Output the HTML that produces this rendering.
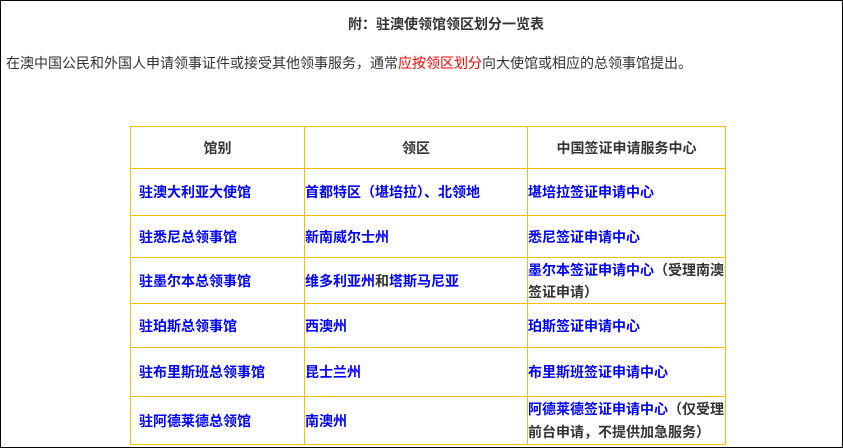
<!DOCTYPE html>
<html><head><meta charset="utf-8"><style>
html,body{margin:0;padding:0;}
body{width:843px;height:448px;box-sizing:border-box;border:1px solid #000;position:relative;overflow:hidden;background:#fff;font-family:"Liberation Sans","Noto Sans CJK SC",sans-serif;color:#333;font-size:14px;}
.t{position:absolute;top:13px;left:0;width:890px;text-align:center;font-weight:bold;font-size:14px;}
.p{position:absolute;top:52px;left:5px;font-size:14px;white-space:nowrap;}
.r{color:#f00;}
table{position:absolute;left:129px;top:125px;border-collapse:collapse;table-layout:fixed;}
td{border:1px solid #f5c000;font-weight:bold;padding:0 0 0 8px;line-height:22px;vertical-align:middle;overflow:hidden;}
td.c{text-align:center;padding:0;}
.b{color:#00f;}
td.n{padding-left:0;}
</style></head><body>
<div class="t">附：驻澳使领馆领区划分一览表</div>
<div class="p">在澳中国公民和外国人申请领事证件或接受其他领事服务，通常<span class="r">应按领区划分</span>向大使馆或相应的总领事馆提出。</div>
<table>
<colgroup><col style="width:174px"><col style="width:223px"><col style="width:198px"></colgroup>
<tr style="height:42px"><td class="c">馆别</td><td class="c">领区</td><td class="c">中国签证申请服务中心</td></tr>
<tr style="height:47px"><td class="b">驻澳大利亚大使馆</td><td class="b n">首都特区（堪培拉）、北领地</td><td class="b n">堪培拉签证申请中心</td></tr>
<tr style="height:42px"><td class="b">驻悉尼总领事馆</td><td class="b n">新南威尔士州</td><td class="b n">悉尼签证申请中心</td></tr>
<tr style="height:46px"><td class="b">驻墨尔本总领事馆</td><td class="n"><span class="b">维多利亚州</span>和<span class="b">塔斯马尼亚</span></td><td class="n"><span class="b">墨尔本签证申请中心</span>（受理南澳签证申请）</td></tr>
<tr style="height:44px"><td class="b">驻珀斯总领事馆</td><td class="b n">西澳州</td><td class="b n">珀斯签证申请中心</td></tr>
<tr style="height:49px"><td class="b">驻布里斯班总领事馆</td><td class="b n">昆士兰州</td><td class="b n">布里斯班签证申请中心</td></tr>
<tr style="height:48px"><td class="b">驻阿德莱德总领馆</td><td class="b n">南澳州</td><td class="n" style="line-height:23px"><span class="b">阿德莱德签证申请中心</span>（仅受理前台申请，不提供加急服务）</td></tr>
</table>
</body></html>
